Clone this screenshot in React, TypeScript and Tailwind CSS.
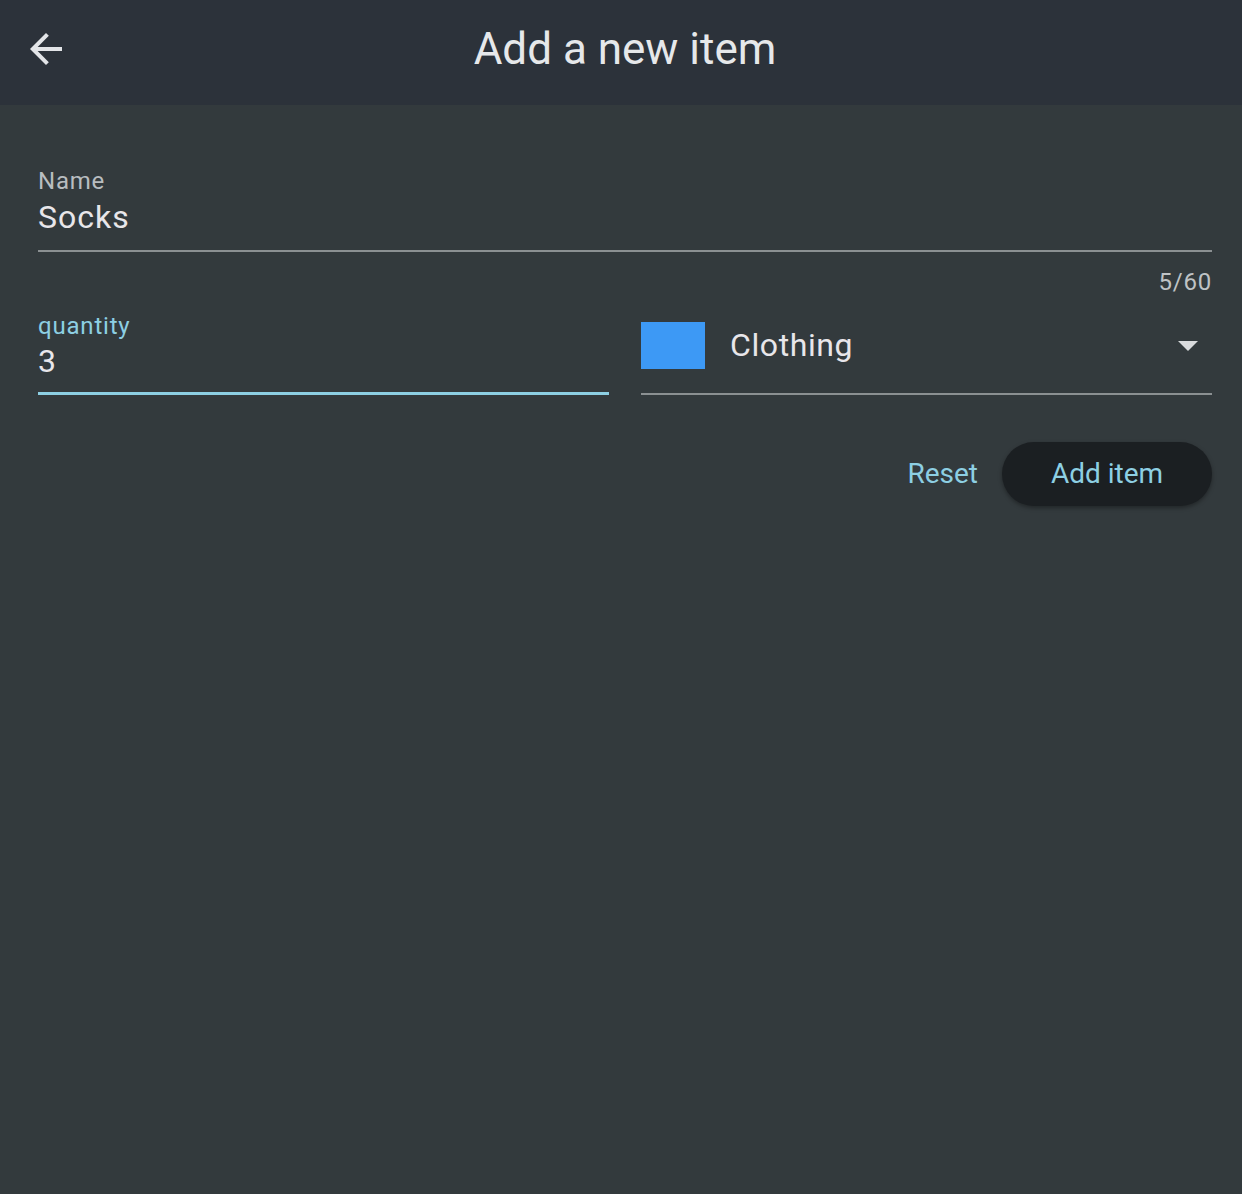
import { useState } from 'react';

function BackArrow() {
  return (
    <svg viewBox="0 0 24 24" className="w-12 h-12" fill="#e3e5e8">
      <path d="M20 11H7.83l5.59-5.59L12 4l-8 8 8 8 1.41-1.41L7.83 13H20v-2z" />
    </svg>
  );
}

function DropArrow() {
  return (
    <svg viewBox="0 0 24 24" className="w-12 h-12" fill="#d9dbdd">
      <path d="M7 10l5 5 5-5z" />
    </svg>
  );
}

export default function App() {
  const [name, setName] = useState('Socks');
  const [qty, setQty] = useState('3');

  return (
    <div className="min-h-[1194px] bg-[#333a3d] font-['Roboto',sans-serif]">
      <header className="relative h-[105px] bg-[#2c323a] flex items-center justify-center">
        <button className="absolute left-[22px] top-[25px]">
          <BackArrow />
        </button>
        <h1 className="ml-[8px] text-[44px] leading-[52px] text-[#e6e8ea] -mt-[7px]">Add a new item</h1>
      </header>

      <main className="pl-[38px] pr-[30px] pt-[62px]">
        {/* Name field */}
        <div className="border-b-2 border-[#8b9092] pb-[13px]">
          <label className="block text-[24px] leading-[28px] tracking-[0.8px] text-[#b8bdc0]">Name</label>
          <input
            value={name}
            onChange={(e) => setName(e.target.value)}
            className="mt-[2px] w-full bg-transparent outline-none text-[32px] leading-[40px] h-[40px] tracking-[1px] text-[#e8e6ea]"
          />
        </div>
        <div className="mt-[16px] text-right text-[24px] leading-[28px] tracking-[0.8px] text-[#bfc3c5]">
          {name.length}/60
        </div>

        {/* quantity + category */}
        <div className="grid grid-cols-2 gap-8 items-end mt-[16px]">
          <div className="border-b-[3px] border-[#8dcfe3] pb-[11px]">
            <label className="block text-[24px] leading-[28px] tracking-[0.8px] text-[#8dcfe3]">quantity</label>
            <input
              value={qty}
              onChange={(e) => setQty(e.target.value)}
              className="mt-[1px] w-full bg-transparent outline-none text-[32px] leading-[40px] h-[40px] tracking-[1px] text-[#e8e6ea]"
            />
          </div>
          <div className="border-b-2 border-[#8b9092] pb-[24px] flex items-center">
            <div className="w-16 h-[47px] bg-[#3d99f5]" />
            <span className="ml-[25px] flex-1 text-[32px] leading-[40px] tracking-[0.6px] text-[#e8e6ea]">Clothing</span>
            <DropArrow />
          </div>
        </div>

        {/* actions */}
        <div className="mt-[47px] flex justify-end items-center gap-2">
          <button className="h-16 px-4 rounded-full text-[28px] text-[#8dcfe3]">Reset</button>
          <button className="h-16 w-[210px] rounded-full bg-[#1b1f22] text-[28px] text-[#8dcfe3] shadow-[0_2px_4px_rgba(0,0,0,0.35)]">
            Add item
          </button>
        </div>
      </main>
    </div>
  );
}
